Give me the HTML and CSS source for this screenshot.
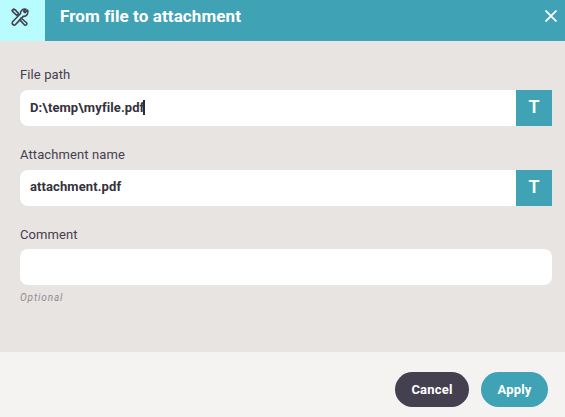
FILE: index.html
```html
<!DOCTYPE html>
<html lang="en">
  <head>
    <meta charset="UTF-8" />
    <meta name="viewport" content="width=device-width, initial-scale=1.0" />
    <title>From file to attachment</title>
    <link rel="stylesheet" href="styles.css">
  </head>
  <body>
    <header class="header">
      <div class="header-icon">
        <svg width="20" height="20" viewBox="0 0 20 20" fill="none" stroke="#45404f" stroke-width="1.6" stroke-linejoin="round" stroke-linecap="round">
          <path d="M2 3.6 L3.6 2 L5.4 3 L8.6 6.6 L6.8 8.4 L3.2 5.2 Z" />
          <path d="M11 11 L16.8 16 A1.6 1.6 0 0 1 14.6 18 L9.6 12.6" />
          <path d="M17.6 3.2 L15 5.6 L13.6 4.4 L16 2.2 A4.4 4.4 0 0 0 10.4 6.8 L2.6 14.8 A2 2 0 0 0 5.4 17.6 L13.2 9.4 A4.4 4.4 0 0 0 17.6 3.2 Z" />
        </svg>
      </div>
      <h1 class="header-title">From file to attachment</h1>
      <svg class="close" width="12" height="12" viewBox="0 0 12 12" stroke="#ffffff" stroke-width="1.8">
        <path d="M0.5 0.5 L11.5 11.5 M11.5 0.5 L0.5 11.5" />
      </svg>
    </header>

    <main class="content">
      <div class="field">
        <label class="field-label">File path</label>
        <div class="field-row">
          <div class="field-input field-input-focus">D:\temp\myfile.pdf<span class="caret"></span></div>
          <button class="field-btn">T</button>
        </div>
      </div>

      <div class="field">
        <label class="field-label">Attachment name</label>
        <div class="field-row">
          <div class="field-input">attachment.pdf</div>
          <button class="field-btn">T</button>
        </div>
      </div>

      <div class="field">
        <label class="field-label">Comment</label>
        <div class="field-row">
          <div class="field-input field-input-full"></div>
        </div>
        <div class="field-hint">Optional</div>
      </div>
    </main>

    <footer class="footer">
      <button class="btn btn-cancel">Cancel</button>
      <button class="btn btn-apply">Apply</button>
    </footer>
  </body>
</html>
```

FILE: styles.css
```css
* {
  box-sizing: border-box;
}

html,
body {
  height: 100%;
}

body {
  margin: 0;
  display: flex;
  flex-direction: column;
  overflow: hidden;
  font-family: Roboto, "Liberation Sans", sans-serif;
  background-color: #e8e4e1;
}

.header {
  display: flex;
  align-items: flex-start;
  height: 41px;
  flex-shrink: 0;
  padding-right: 8px;
  background-color: #3fa2b5;
}

.header-icon {
  display: flex;
  justify-content: center;
  width: 45px;
  height: 100%;
  padding-top: 7px;
  padding-right: 5px;
  background-color: #b8fcff;
}

.header-title {
  flex: 1;
  margin: 6px 0 0 15px;
  font-size: 17px;
  font-weight: 700;
  line-height: 20px;
  letter-spacing: 0.1px;
  color: #ffffff;
}

.close {
  margin-top: 10px;
}

.content {
  flex: 1;
  padding: 26.4px 13px 0 20px;
}

.field {
  margin-bottom: 21px;
}

.field-label {
  display: block;
  height: 22.6px;
  font-size: 13px;
  line-height: 16px;
  letter-spacing: 0.1px;
  color: #45404f;
}

.field-row {
  display: flex;
  height: 36px;
}

.field-input {
  flex: 1;
  padding-left: 10px;
  font-size: 13px;
  font-weight: 700;
  line-height: 34.6px;
  letter-spacing: 0.1px;
  color: #35323c;
  background-color: #ffffff;
  border-radius: 8px 0 0 8px;
}

.field-input-focus {
  line-height: 36px;
}

.field-input-full {
  border-radius: 8px;
}

.caret {
  display: inline-block;
  width: 2px;
  height: 15px;
  margin-left: -1px;
  vertical-align: -3px;
  background-color: #2e2b35;
}

.field-btn {
  width: 36px;
  padding: 0 0 1px;
  border: none;
  font-family: inherit;
  font-size: 18px;
  font-weight: 600;
  line-height: 1;
  color: #ffffff;
  background-color: #3fa2b5;
}

.field-hint {
  margin-top: 7px;
  font-size: 10px;
  font-style: italic;
  letter-spacing: 0.9px;
  color: #8f8b92;
}

.footer {
  display: flex;
  justify-content: flex-end;
  gap: 12px;
  height: 65px;
  flex-shrink: 0;
  padding: 20px 17px 0 0;
  background-color: #f4f3f1;
}

.btn {
  height: 35px;
  padding: 0;
  border: none;
  border-radius: 18px;
  font-family: inherit;
  font-size: 13px;
  font-weight: 700;
  letter-spacing: 0.2px;
  color: #ffffff;
}

.btn-cancel {
  width: 74px;
  background-color: #45404f;
}

.btn-apply {
  width: 67px;
  background-color: #3fa2b5;
}
```
